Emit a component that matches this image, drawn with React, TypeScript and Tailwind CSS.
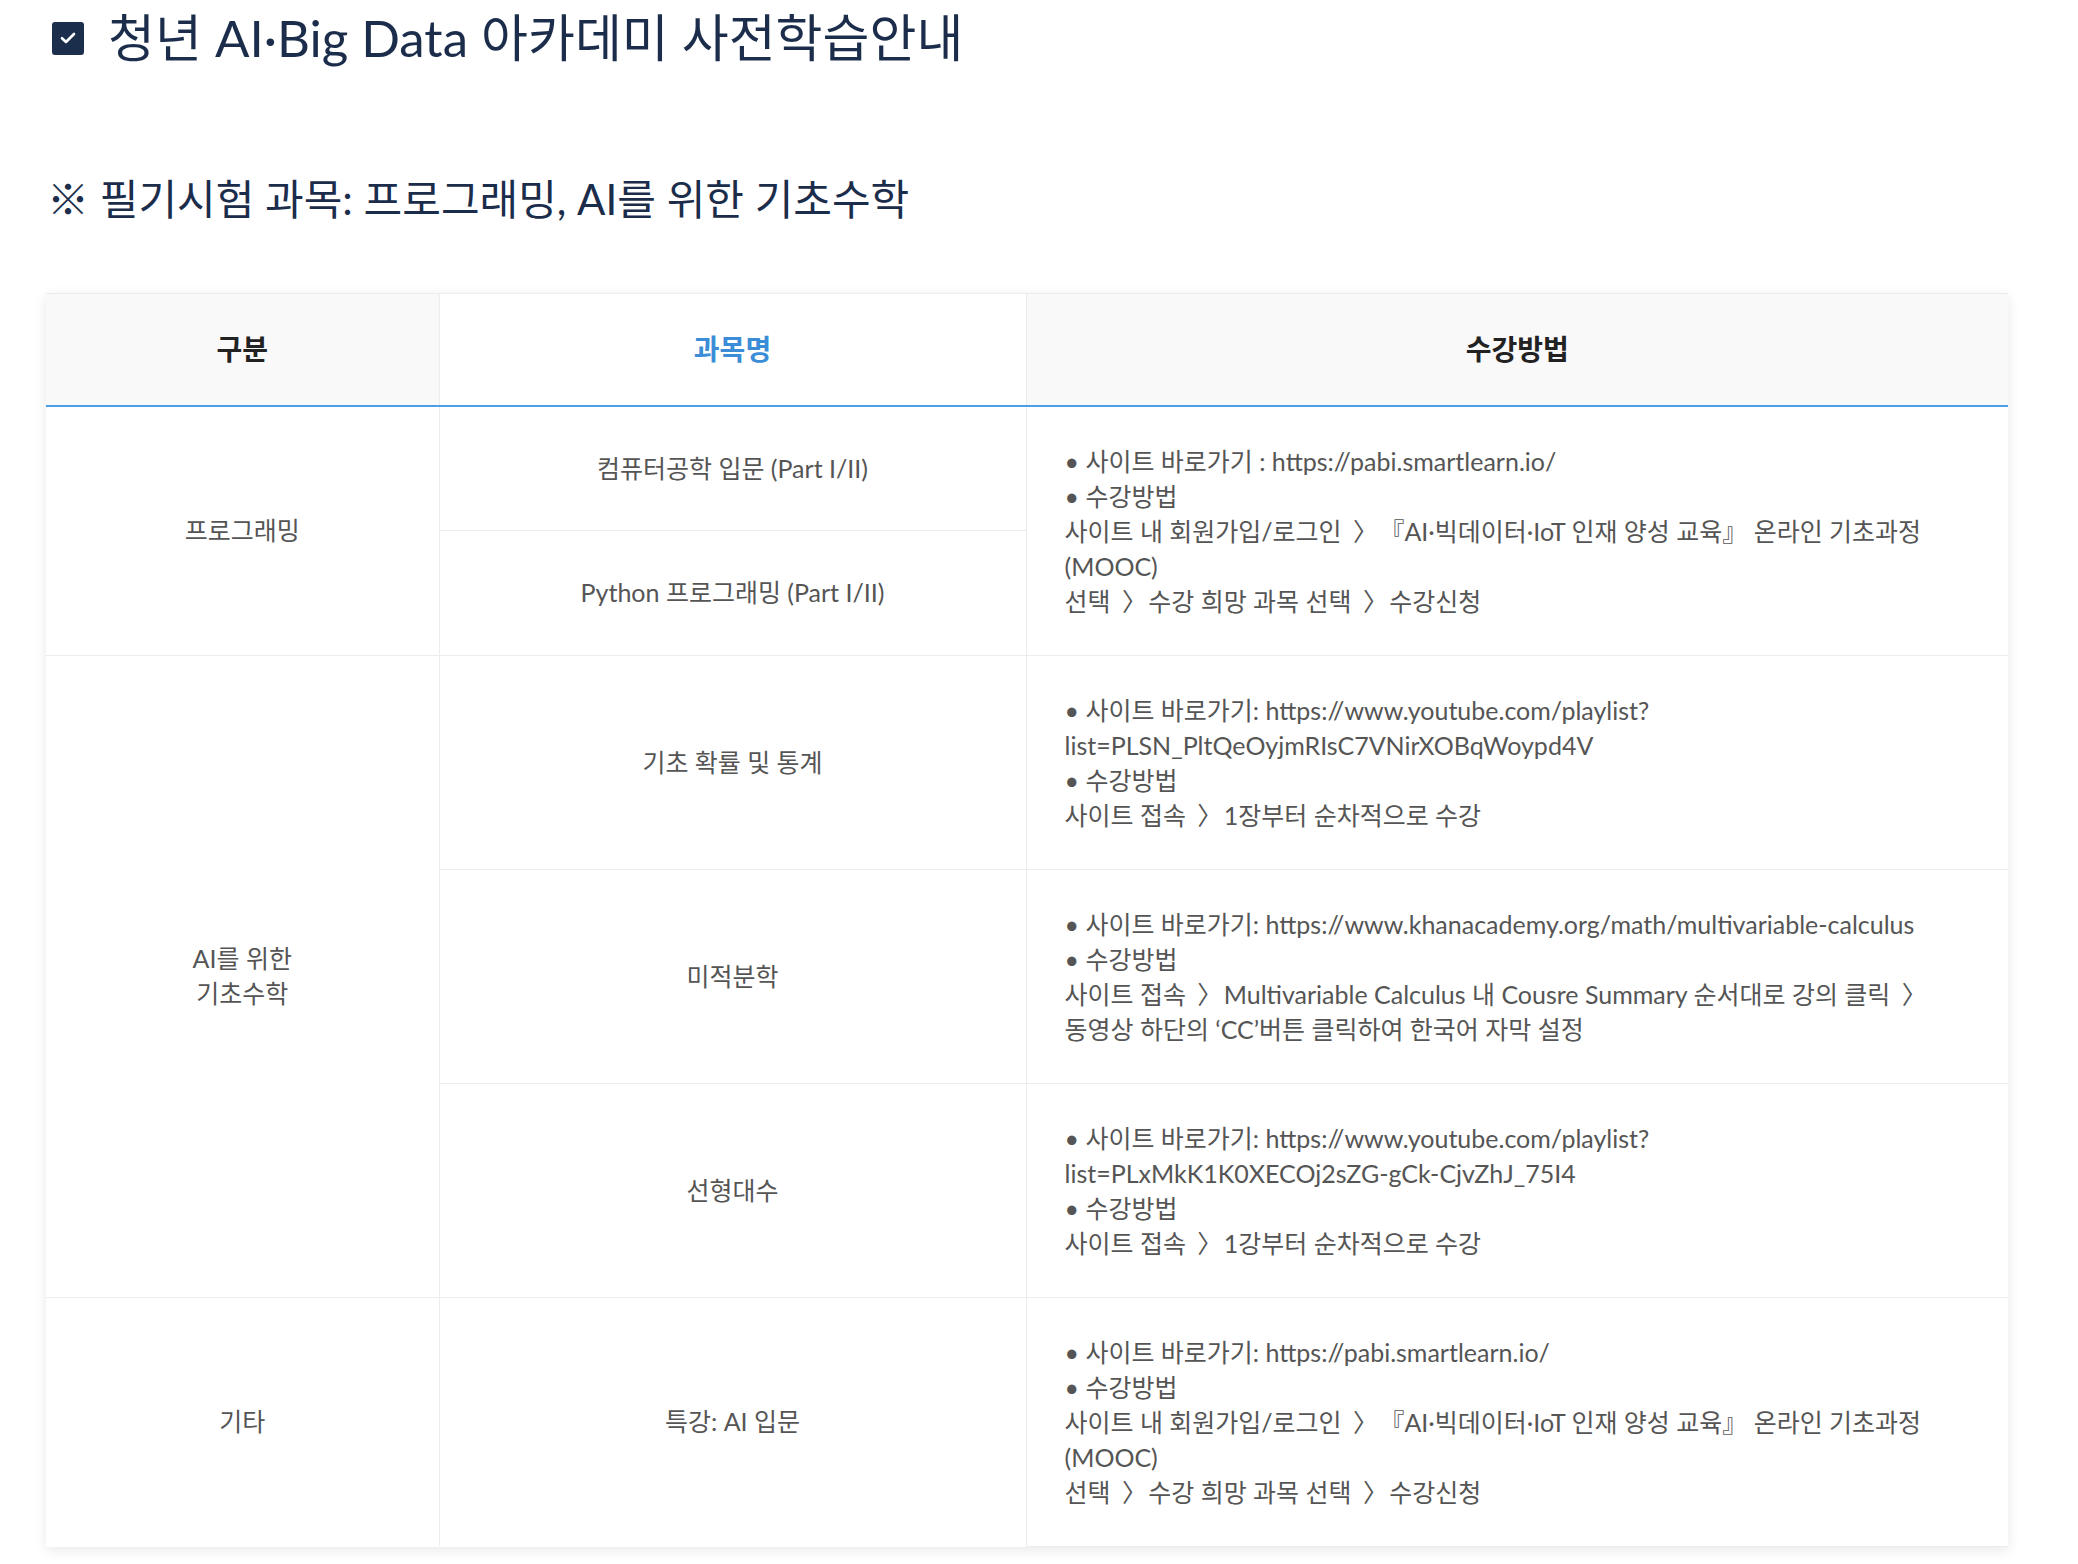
const FONT = "font-['Lato','Noto_Sans_CJK_KR',sans-serif]";

// the CJK 〉 sits at the left of its box; pad it so it looks centred like the reference
function Line({ text }: { text: string }) {
  const parts = text.split('〉');
  return (
    <div>
      {parts.map((part, i) => (
        <span key={i}>
          {part}
          {i < parts.length - 1 && <span className="inline-block pl-[5px] tracking-[-5px]">〉</span>}
        </span>
      ))}
    </div>
  );
}

function Method({ lines, rowSpan }: { lines: string[]; rowSpan?: number }) {
  return (
    <td
      rowSpan={rowSpan}
      className="border-b border-[#ececec] pl-[38px] pr-[40px] pt-[37px] pb-[36px] text-left align-middle text-[25px] leading-[35px] text-[#555]"
    >
      {lines.map((line, i) => (
        <Line key={i} text={line} />
      ))}
    </td>
  );
}

const cell =
  'border-b border-r border-[#ececec] text-center align-middle text-[25px] leading-[35px] text-[#555]';

const smartlearn = [
  '• 사이트 바로가기 : https://pabi.smartlearn.io/',
  '• 수강방법',
  '사이트 내 회원가입/로그인 〉 『AI·빅데이터·IoT 인재 양성 교육』 온라인 기초과정',
  '(MOOC)',
  '선택 〉 수강 희망 과목 선택 〉 수강신청',
];

export default function App() {
  return (
    <div className={`min-h-screen w-full bg-white ${FONT}`}>
      <div className="px-[46px] pt-[9px] pb-[16px]">
        <div className="flex items-center pl-[6px]">
          <span className="flex h-[33px] w-[32px] items-center justify-center rounded-[3px] bg-[#1b2f4d]">
            <svg width="16" height="12" viewBox="0 0 16 12" fill="none">
              <path d="M2 6.2 6 10 14 2" stroke="white" strokeWidth="2.6" strokeLinecap="round" strokeLinejoin="round" />
            </svg>
          </span>
          <h1 className="ml-[24px] text-[51px] leading-[58px] font-normal text-[#1b2d4b]">
            청년 AI·Big Data 아카데미 사전학습안내
          </h1>
        </div>

        <h2 className="mt-[108px] pl-[1px] text-[42px] leading-[48px] font-normal text-[#1b2d4b]">
          ※ 필기시험 과목: 프로그래밍, AI를 위한 기초수학
        </h2>

        <table className="mt-[70px] w-[1962px] table-fixed border-collapse border-t border-[#ececec] bg-white shadow-[0_3px_12px_rgba(0,0,0,0.09)]">
          <colgroup>
            <col className="w-[393px]" />
            <col className="w-[587px]" />
            <col className="w-[982px]" />
          </colgroup>
          <thead>
            <tr className="h-[112px] border-b-2 border-[#4a9fe5]">
              <th className="border-r border-[#ececec] bg-[#f9f9f9] text-[28px] font-bold text-[#222]">구분</th>
              <th className="border-r border-[#ececec] bg-white text-[28px] font-bold text-[#3a8dd6]">과목명</th>
              <th className="bg-[#f9f9f9] text-[28px] font-bold text-[#222]">수강방법</th>
            </tr>
          </thead>
          <tbody>
            <tr>
              <td rowSpan={2} className={cell}>프로그래밍</td>
              <td className={`${cell} h-[124px]`}>컴퓨터공학 입문 (Part I/II)</td>
              <Method rowSpan={2} lines={smartlearn} />
            </tr>
            <tr>
              <td className={`${cell} h-[124px]`}>Python 프로그래밍 (Part I/II)</td>
            </tr>
            <tr>
              <td rowSpan={3} className={cell}>
                AI를 위한
                <br />
                기초수학
              </td>
              <td className={cell}>기초 확률 및 통계</td>
              <Method
                lines={[
                  '• 사이트 바로가기: https://www.youtube.com/playlist?',
                  'list=PLSN_PltQeOyjmRIsC7VNirXOBqWoypd4V',
                  '• 수강방법',
                  '사이트 접속 〉 1장부터 순차적으로 수강',
                ]}
              />
            </tr>
            <tr>
              <td className={cell}>미적분학</td>
              <Method
                lines={[
                  '• 사이트 바로가기: https://www.khanacademy.org/math/multivariable-calculus',
                  '• 수강방법',
                  '사이트 접속 〉 Multivariable Calculus 내 Cousre Summary 순서대로 강의 클릭 〉',
                  '동영상 하단의 ‘CC’버튼 클릭하여 한국어 자막 설정',
                ]}
              />
            </tr>
            <tr>
              <td className={cell}>선형대수</td>
              <Method
                lines={[
                  '• 사이트 바로가기: https://www.youtube.com/playlist?',
                  'list=PLxMkK1K0XECOj2sZG-gCk-CjvZhJ_75I4',
                  '• 수강방법',
                  '사이트 접속 〉 1강부터 순차적으로 수강',
                ]}
              />
            </tr>
            <tr>
              <td className={`${cell} border-b-0`}>기타</td>
              <td className={`${cell} border-b-0`}>특강: AI 입문</td>
              <Method
                lines={['• 사이트 바로가기: https://pabi.smartlearn.io/', ...smartlearn.slice(1)]}
              />
            </tr>
          </tbody>
        </table>
      </div>
    </div>
  );
}
